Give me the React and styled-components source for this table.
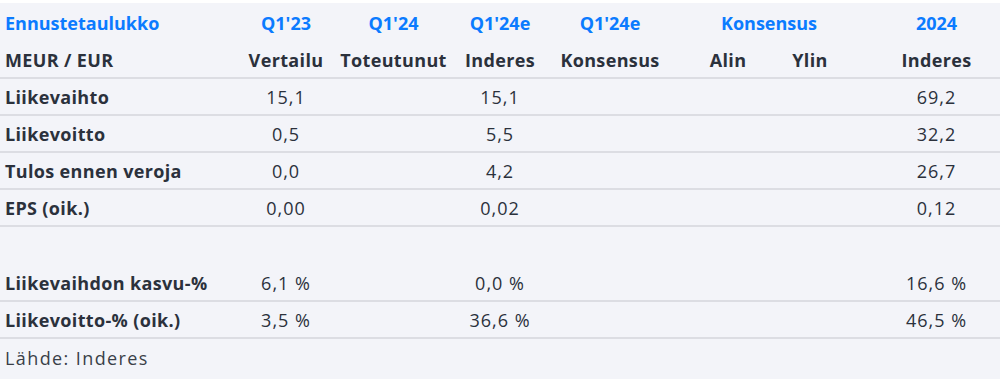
import styled, { createGlobalStyle } from 'styled-components'

const Global = createGlobalStyle`
  html, body {
    margin: 0;
    padding: 0;
    background: #ffffff;
  }
  body {
    font-family: "Open Sans", "Liberation Sans", sans-serif;
  }
`

const Page = styled.div`
  margin-top: 3px;
  width: 1000px;
  height: 376px;
  background: #f3f4f9;
  color: #2b313c;
`

const Table = styled.div`
  display: grid;
  grid-template-columns: 232px 108px 107px 106px 114px 102px 82px 149px;
`

const Cell = styled.div`
  height: ${p => p.h || 35}px;
  display: flex;
  align-items: center;
  justify-content: ${p => (p.left ? 'flex-start' : 'center')};
  padding-left: ${p => (p.left ? 5 : p.pl || 0)}px;
  font-size: 18px;
  letter-spacing: ${p => (p.blue ? 0 : p.bold ? 0.35 : 1)}px;
  font-weight: ${p => (p.bold ? 700 : 400)};
  color: ${p => (p.blue ? '#0b7bff' : '#2b313c')};
  border-bottom: ${p => (p.line ? '2px solid #dcdde3' : 'none')};
  grid-column: span ${p => p.span || 1};
  white-space: nowrap;
`

const Source = styled.div`
  padding-left: 5px;
  height: 38px;
  display: flex;
  align-items: center;
  font-size: 18px;
  letter-spacing: 1.4px;
  color: #3a3f48;
`

const cols = [0, 0, 0, 0, 0, 20, 0, 22]

const rows = [
  ['Liikevaihto', '15,1', '', '15,1', '', '', '', '69,2'],
  ['Liikevoitto', '0,5', '', '5,5', '', '', '', '32,2'],
  ['Tulos ennen veroja', '0,0', '', '4,2', '', '', '', '26,7'],
  ['EPS (oik.)', '0,00', '', '0,02', '', '', '', '0,12'],
]

const pctRows = [
  ['Liikevaihdon kasvu-%', '6,1 %', '', '0,0 %', '', '', '', '16,6 %'],
  ['Liikevoitto-% (oik.)', '3,5 %', '', '36,6 %', '', '', '', '46,5 %'],
]

const DataRow = ({ row, line = true }) => (
  <>
    {row.map((v, i) =>
      i === 0 ? (
        <Cell key={i} left bold line={line}>{v}</Cell>
      ) : (
        <Cell key={i} pl={cols[i]} line={line}>{v}</Cell>
      )
    )}
  </>
)

const App = () => {
  return (
    <>
      <Global />
      <Page>
        <Table>
          <Cell left bold blue h={40}>Ennustetaulukko</Cell>
          <Cell bold blue h={40}>Q1'23</Cell>
          <Cell bold blue h={40}>Q1'24</Cell>
          <Cell bold blue h={40}>Q1'24e</Cell>
          <Cell bold blue h={40}>Q1'24e</Cell>
          <Cell bold blue h={40} span={2} pl={20}>Konsensus</Cell>
          <Cell bold blue h={40} pl={22}>2024</Cell>

          <Cell left bold h={34} line>MEUR / EUR</Cell>
          <Cell bold h={34} line>Vertailu</Cell>
          <Cell bold h={34} line>Toteutunut</Cell>
          <Cell bold h={34} line>Inderes</Cell>
          <Cell bold h={34} line>Konsensus</Cell>
          <Cell bold h={34} line pl={20}>Alin</Cell>
          <Cell bold h={34} line>Ylin</Cell>
          <Cell bold h={34} line pl={22}>Inderes</Cell>

          {rows.map((r, i) => <DataRow key={i} row={r} />)}
          {cols.map((_, i) => <Cell key={'e' + i} h={38} />)}
          {pctRows.map((r, i) => <DataRow key={'p' + i} row={r} />)}
        </Table>
        <Source>Lähde: Inderes</Source>
      </Page>
    </>
  )
}

export default App
